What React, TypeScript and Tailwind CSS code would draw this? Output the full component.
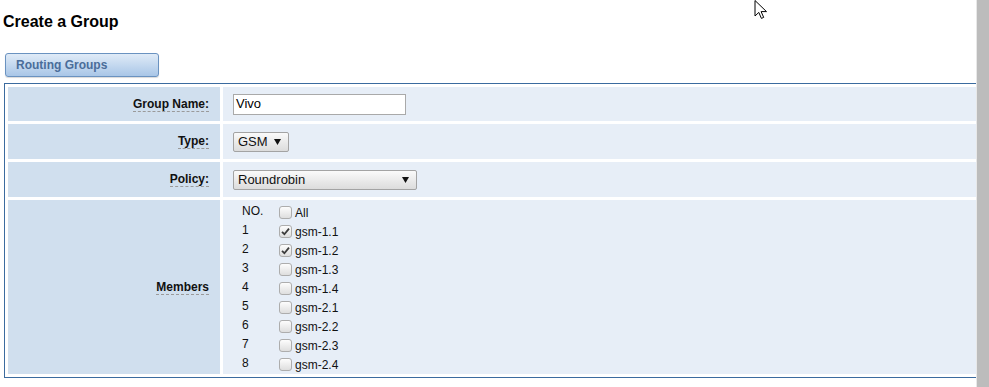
import type { ReactNode } from "react";

const MEMBERS = [
  { no: "1", name: "gsm-1.1", checked: true },
  { no: "2", name: "gsm-1.2", checked: true },
  { no: "3", name: "gsm-1.3", checked: false },
  { no: "4", name: "gsm-1.4", checked: false },
  { no: "5", name: "gsm-2.1", checked: false },
  { no: "6", name: "gsm-2.2", checked: false },
  { no: "7", name: "gsm-2.3", checked: false },
  { no: "8", name: "gsm-2.4", checked: false },
];

function Label({ children }: { children: ReactNode }) {
  return (
    <div className="flex items-center justify-end bg-[#d0dfee] pr-[11px]">
      <span className="border-b border-dashed border-[#9a9a9a] text-[12px] font-bold leading-[14px] text-[#111]">
        {children}
      </span>
    </div>
  );
}

function Checkbox({ checked }: { checked: boolean }) {
  return (
    <span className="mt-[4px] flex h-[13px] w-[13px] shrink-0 items-center justify-center rounded-[3px] border border-[#adadad] bg-gradient-to-b from-[#fdfdfd] to-[#dedede]">
      {checked && (
        <svg width="9" height="9" viewBox="0 0 9 9">
          <path d="M1 4.8 3.4 7.2 8 1.6" fill="none" stroke="#3c3c3c" strokeWidth="1.8" />
        </svg>
      )}
    </span>
  );
}

function Select({ value, width }: { value: string; width: string }) {
  return (
    <div
      className={`flex h-[20px] items-center justify-between rounded-[2px] border border-[#a3a3a3] bg-gradient-to-b from-[#fafafa] to-[#dcdcdc] pl-[4px] pr-[7px] text-[13px] leading-[16px] text-[#111] ${width}`}
    >
      <span>{value}</span>
      <svg width="7" height="7" viewBox="0 0 7 7">
        <path d="M0 1h7L3.5 7z" fill="#111" />
      </svg>
    </div>
  );
}

export default function App() {
  return (
    <div className="flex h-[387px] w-[989px] overflow-hidden bg-white font-['Liberation_Sans',Arial,sans-serif]">
      <div className="relative flex-1 overflow-hidden">
        <h1 className="ml-[3px] mt-[13px] text-[16px] font-bold leading-[18px] text-black">Create a Group</h1>

        <div className="ml-[5px] mt-[22px] flex h-[24px] w-[154px] items-center rounded-[3px] border border-[#6a92c0] bg-gradient-to-b from-[#e0ebf7] to-[#a9c6e7] pl-[10px] shadow-[0_1px_1px_rgba(0,0,0,0.15)]">
          <span className="text-[12px] font-bold leading-[14px] text-[#4a6d9a]">Routing Groups</span>
        </div>

        <div className="ml-[4px] mt-[6px] grid grid-cols-[212px_1fr] grid-rows-[34px_35px_35px_174px] gap-[3px] border border-r-0 border-[#3b6b9f] p-[3px] pr-0">
          <Label>Group Name:</Label>
          <div className="flex items-center bg-[#e7eef7] pl-[10px]">
            <div className="flex h-[21px] w-[173px] items-center border border-[#a9a9a9] bg-white pl-[2px] text-[13px] leading-[16px] text-black">
              Vivo
            </div>
          </div>

          <Label>Type:</Label>
          <div className="flex items-center bg-[#e7eef7] pl-[10px]">
            <Select value="GSM" width="w-[56px]" />
          </div>

          <Label>Policy:</Label>
          <div className="flex items-center bg-[#e7eef7] pl-[10px]">
            <Select value="Roundrobin" width="w-[184px]" />
          </div>

          <Label>Members</Label>
          <div className="bg-[#e7eef7] pl-[19px] pt-[2px] text-[12px] leading-[14px] text-[#111]">
            <div className="flex h-[19px]">
              <span className="w-[37px] pt-[2px]">NO.</span>
              <Checkbox checked={false} />
              <span className="ml-[3px] pt-[4px]">All</span>
            </div>
            {MEMBERS.map((m) => (
              <div key={m.name} className="flex h-[19px]">
                <span className="w-[37px] pt-[2px]">{m.no}</span>
                <Checkbox checked={m.checked} />
                <span className="ml-[3px] pt-[4px]">{m.name}</span>
              </div>
            ))}
          </div>
        </div>

        {/* mouse pointer captured in the screenshot */}
        <svg className="absolute left-[754px] top-0" width="14" height="20" viewBox="0 0 14 20">
          <path d="M1 0.5V16l3.8-3.6 2.6 6 2.3-1-2.6-5.8H12.5z" fill="#fff" stroke="#000" strokeWidth="1" strokeLinejoin="round" />
        </svg>
      </div>
      <div className="w-[13px] border-l border-[#e8e8e8] bg-[#bcbcbc]" />
    </div>
  );
}
